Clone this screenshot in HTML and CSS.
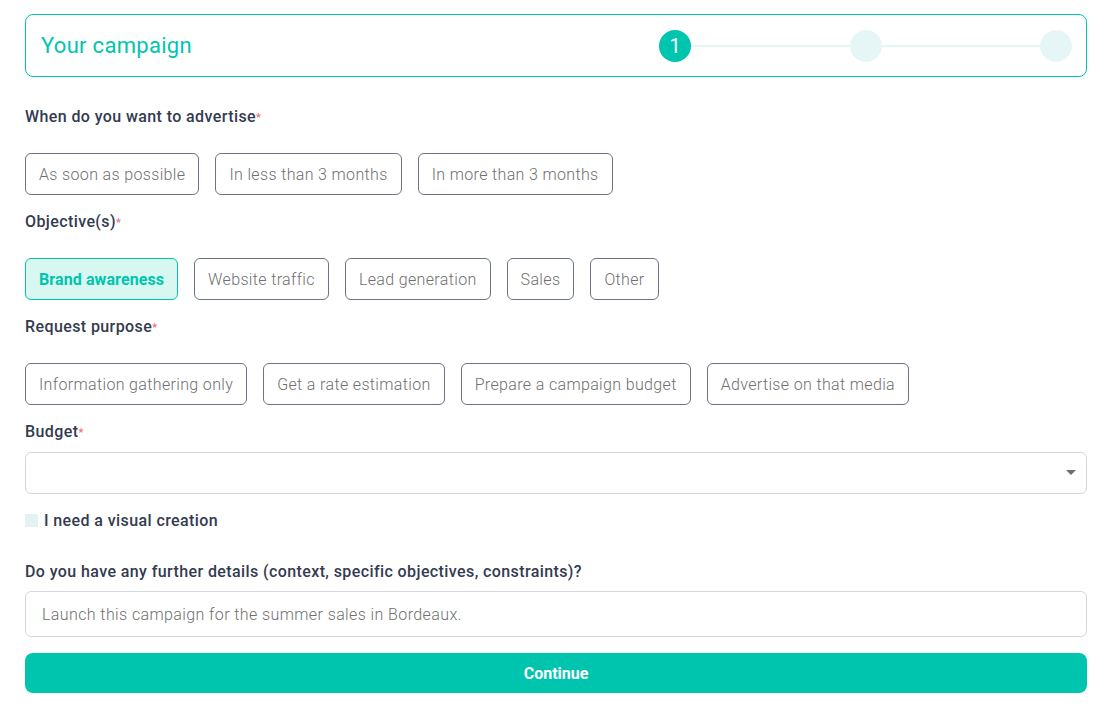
FILE: index.html
```html
<!DOCTYPE html>
<html>

<head>
	<meta charset="utf-8">
	<title>Your campaign</title>
	<link rel="stylesheet" href="styles.css">
</head>

<body>
	<div class="container">
		<div class="header">
			<div class="title">Your campaign</div>
			<div class="steps">
				<span class="step active">1</span>
				<span class="line"></span>
				<span class="step"></span>
				<span class="line"></span>
				<span class="step"></span>
			</div>
		</div>

		<div class="field">
			<div class="label">When do you want to advertise<span class="req">*</span></div>
			<div class="chips">
				<span class="chip">As soon as possible</span>
				<span class="chip">In less than 3 months</span>
				<span class="chip">In more than 3 months</span>
			</div>
		</div>

		<div class="field">
			<div class="label">Objective(s)<span class="req">*</span></div>
			<div class="chips">
				<span class="chip selected">Brand awareness</span>
				<span class="chip">Website traffic</span>
				<span class="chip">Lead generation</span>
				<span class="chip">Sales</span>
				<span class="chip">Other</span>
			</div>
		</div>

		<div class="field">
			<div class="label">Request purpose<span class="req">*</span></div>
			<div class="chips">
				<span class="chip">Information gathering only</span>
				<span class="chip">Get a rate estimation</span>
				<span class="chip">Prepare a campaign budget</span>
				<span class="chip">Advertise on that media</span>
			</div>
		</div>

		<div class="field">
			<div class="label small-gap">Budget<span class="req">*</span></div>
			<div class="select">
				<span class="arrow"></span>
			</div>
		</div>

		<label class="check">
			<span class="box"></span>
			I need a visual creation
		</label>

		<div class="field details">
			<div class="label tight">Do you have any further details (context, specific objectives, constraints)?</div>
			<input class="text" type="text" placeholder="Launch this campaign for the summer sales in Bordeaux." />
		</div>

		<button type="submit" class="submit">Continue</button>
	</div>
</body>

</html>
```

FILE: styles.css
```css
* {
	margin: 0;
	padding: 0;
	box-sizing: border-box;
}
body {
	font-family: Roboto, "Noto Sans", sans-serif;
	color: #343b4f;
	background-color: #ffffff;
}
.container {
	width: 1062px;
	margin: 0 0 0 25px;
	padding-top: 14px;
}
.header {
	height: 63px;
	border: 1px solid #00c5ae;
	border-radius: 8px;
	display: flex;
	align-items: center;
	justify-content: space-between;
	padding: 0 14px 0 15px;
}
.title {
	font-size: 22px;
	letter-spacing: 0.3px;
	color: #00c5ae;
}
.steps {
	display: flex;
	align-items: center;
	width: 413px;
}
.step {
	width: 32px;
	height: 32px;
	border-radius: 50%;
	background-color: #e6f6f6;
	flex-shrink: 0;
	display: flex;
	align-items: center;
	justify-content: center;
	color: #ffffff;
	font-size: 20px;
}
.step.active {
	background-color: #00c5ae;
}
.line {
	flex: 1;
	height: 2px;
	background-color: #e6f6f6;
}
.field {
	margin-top: 15px;
}
.header + .field {
	margin-top: 28px;
}
.label {
	font-size: 16px;
	font-weight: 500;
	letter-spacing: 0.4px;
	line-height: 24px;
	height: 24px;
	margin-bottom: 24px;
}
.label.small-gap {
	margin-bottom: 8px;
}
.label.tight {
	margin-bottom: 7px;
}
.req {
	color: #f26d6d;
	font-size: 11px;
	vertical-align: top;
	position: relative;
	top: 1px;
}
.chips {
	display: flex;
	gap: 16px;
}
.chip {
	height: 42px;
	padding: 0 13px;
	border: 1px solid #6b7387;
	border-radius: 6px;
	display: flex;
	align-items: center;
	font-size: 16px;
	font-weight: 300;
	letter-spacing: 0.35px;
	color: #6f6f6f;
}
.chip.selected {
	border-color: #00c5ae;
	background-color: #d9f7f1;
	color: #00c5ae;
	font-weight: 700;
	letter-spacing: 0.1px;
}
.select {
	height: 42px;
	border: 1px solid #d3d6de;
	border-radius: 6px;
	position: relative;
}
.arrow {
	position: absolute;
	right: 10px;
	top: 17px;
	border-left: 5px solid transparent;
	border-right: 5px solid transparent;
	border-top: 5px solid #6f6f6f;
}
.check {
	display: flex;
	align-items: center;
	height: 20px;
	margin-top: 16px;
	font-size: 16px;
	font-weight: 500;
	letter-spacing: 0.4px;
}
.box {
	width: 13px;
	height: 13px;
	background-color: #e3f2f2;
	margin-right: 6px;
}
.field.details {
	margin-top: 30px;
}
.text {
	display: block;
	width: 100%;
	height: 46px;
	border: 1px solid #d3d6de;
	border-radius: 6px;
	padding: 0 16px;
	font-family: Roboto, "Noto Sans", sans-serif;
	font-size: 16px;
	font-weight: 300;
	letter-spacing: 0.4px;
	outline: none;
}
.text::placeholder {
	color: #6f6f6f;
}
.submit {
	display: block;
	width: 100%;
	height: 40px;
	margin-top: 16px;
	border: none;
	border-radius: 8px;
	background-color: #00c5ae;
	color: #ffffff;
	font-family: Roboto, "Noto Sans", sans-serif;
	font-size: 16px;
	font-weight: 700;
	cursor: pointer;
}
```
